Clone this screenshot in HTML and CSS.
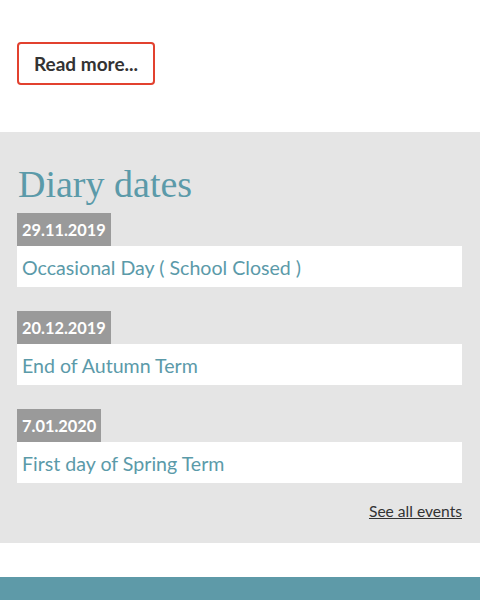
FILE: index.html
```html
<!DOCTYPE html>
<html lang="en">
<head>
    <meta charset="UTF-8">
    <meta name="viewport" content="width=device-width, initial-scale=1.0">
    <title>Diary dates</title>
    <link rel="stylesheet" href="styles.css">
</head>
<body>
    <div class="intro">
        <a class="read-more" href="#">Read more...</a>
    </div>

    <section class="diary">
        <h2>Diary dates</h2>

        <div class="event">
            <span class="event-date">29.11.2019</span>
            <a class="event-title" href="#">Occasional Day ( School Closed )</a>
        </div>

        <div class="event">
            <span class="event-date">20.12.2019</span>
            <a class="event-title" href="#">End of Autumn Term</a>
        </div>

        <div class="event">
            <span class="event-date">7.01.2020</span>
            <a class="event-title" href="#">First day of Spring Term</a>
        </div>

        <div class="all-events">
            <a href="#">See all events</a>
        </div>
    </section>

    <footer class="footer"></footer>
</body>
</html>
```

FILE: styles.css
```css
body {
    margin: 0;
    font-family: Lato, 'Open Sans', sans-serif;
    color: #333;
    background: #fff;
}

a {
    text-decoration: none;
}

.intro {
    padding: 42px 17px 47px;
}

.read-more {
    display: inline-block;
    box-sizing: border-box;
    height: 43px;
    line-height: 39px;
    padding: 0 15px;
    border: 2px solid #e2412f;
    border-radius: 4px;
    font-size: 19px;
    font-weight: bold;
    color: #333;
}

.diary {
    background: #e5e5e5;
    padding: 30px 18px 23px 17px;
}

.diary h2 {
    margin: 0 0 7px 1px;
    font-family: 'Liberation Serif', 'DejaVu Serif', serif;
    font-weight: normal;
    font-size: 38px;
    line-height: 44px;
    color: #5b9aa9;
}

.event {
    margin-bottom: 24px;
}

.event-date {
    display: inline-block;
    padding: 0 5px;
    height: 33px;
    line-height: 33px;
    background: #9a9a9a;
    color: #fff;
    font-size: 16.4px;
    font-weight: bold;
}

.event-title {
    display: block;
    height: 41px;
    line-height: 43px;
    padding: 0 5px;
    background: #fff;
    font-size: 19.6px;
    color: #5b9aa9;
}

.all-events {
    margin-top: -5px;
    text-align: right;
    font-size: 15.6px;
}

.all-events a {
    color: #333;
    text-decoration: underline;
}

.footer {
    margin-top: 34px;
    height: 30px;
    background: #5e9aa8;
}
```
